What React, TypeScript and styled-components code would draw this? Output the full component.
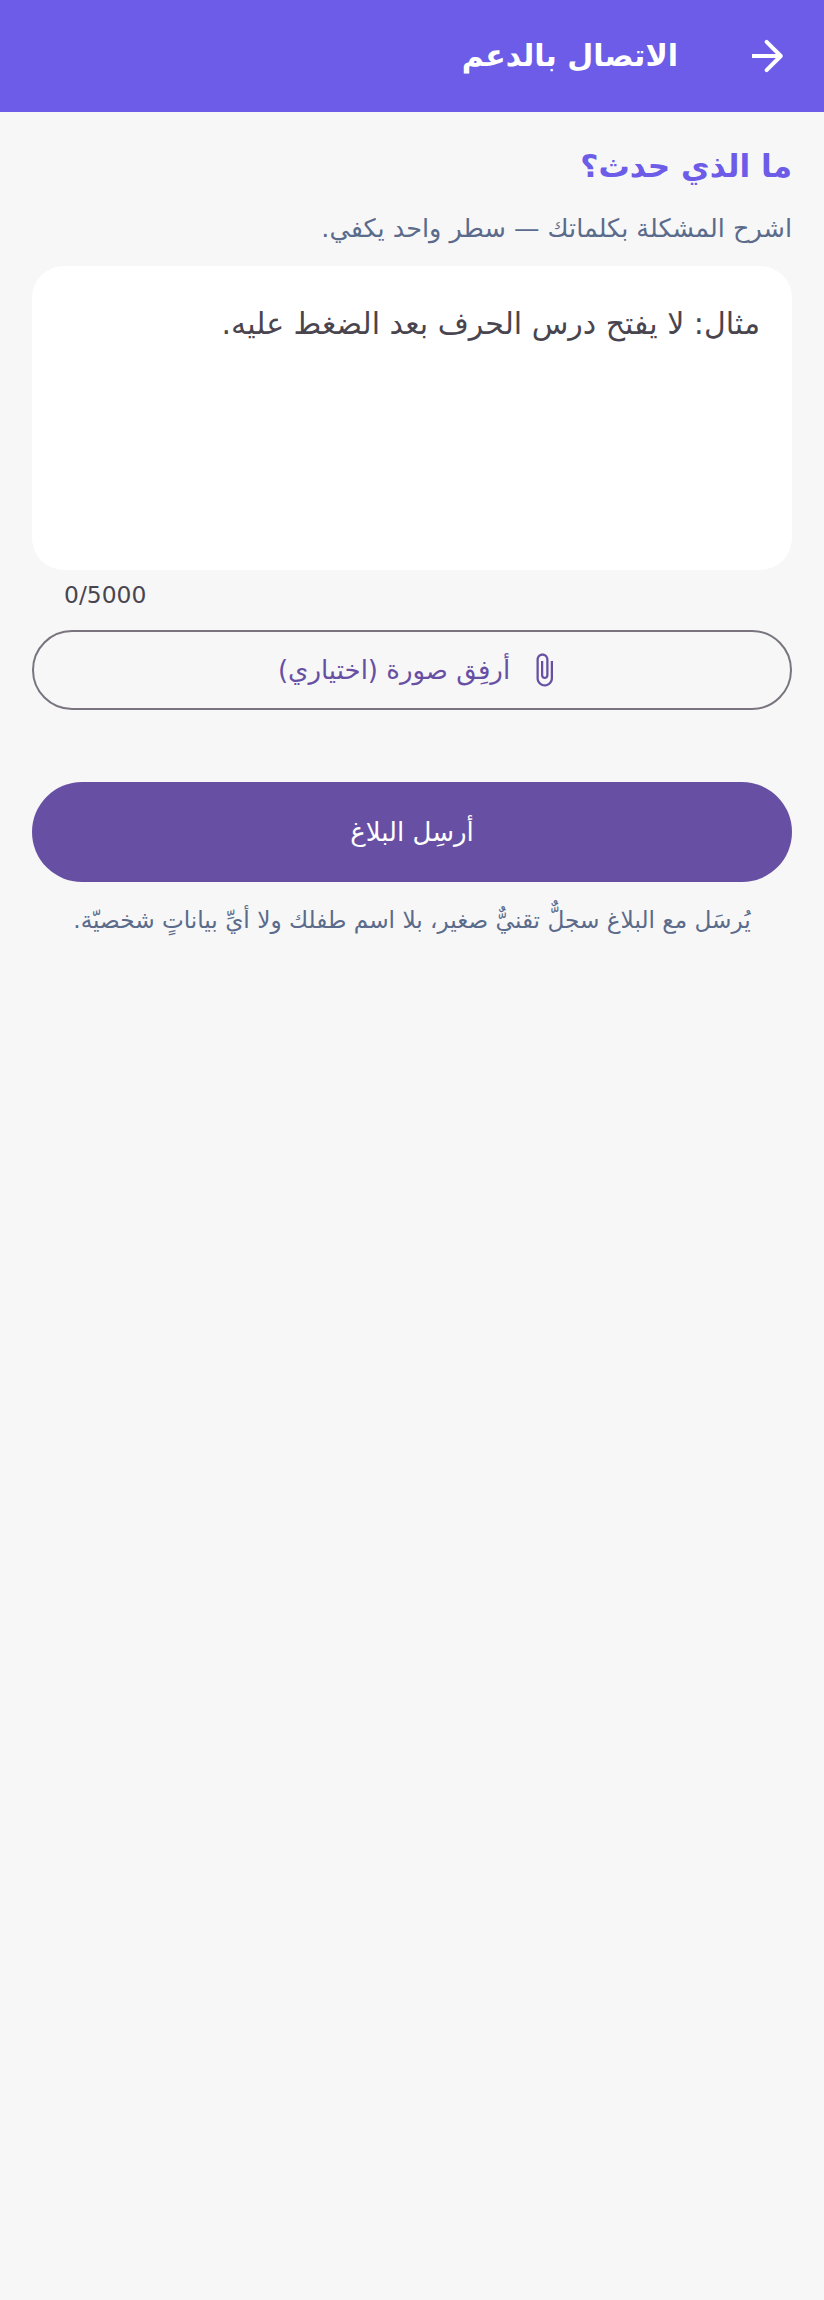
import styled, { createGlobalStyle } from "styled-components";

const GlobalStyle = createGlobalStyle`
  html, body {
    margin: 0;
    padding: 0;
    background-color: #f7f7f7;
  }
  body {
    font-family: "DejaVu Sans", "Noto Sans", sans-serif;
  }
  * {
    box-sizing: border-box;
  }
`;

const Page = styled.div`
  direction: rtl;
  width: 824px;
  height: 2300px;
  background-color: #f7f7f7;
`;

const Header = styled.header`
  display: flex;
  align-items: center;
  gap: 66px;
  height: 112px;
  padding: 0 32px 0 0;
  background-color: #6c5ce7;
`;

const BackButton = styled.button`
  display: flex;
  width: 48px;
  height: 48px;
  padding: 0;
  border: 0;
  background: none;
  color: #ffffff;
`;

const HeaderTitle = styled.h1`
  margin: 0;
  color: #ffffff;
  font-size: 30px;
  font-weight: 700;
  line-height: 48px;
`;

const Content = styled.main`
  display: flex;
  flex-direction: column;
  padding: 30px 32px 0;
`;

const Title = styled.h2`
  margin: 0;
  color: #6c5ce7;
  font-size: 31.2px;
  font-weight: 700;
  line-height: 48px;
`;

const Subtitle = styled.p`
  margin: 18px 0 0;
  color: #5a6b8c;
  font-size: 25.5px;
  line-height: 40px;
`;

const MessageBox = styled.div`
  height: 304px;
  margin-top: 18px;
  padding: 34px 32px;
  border-radius: 32px;
  background-color: #ffffff;
  color: #49454f;
  font-size: 30px;
  line-height: 48px;
`;

const Counter = styled.div`
  margin-top: 9px;
  padding: 0 32px;
  color: #49454f;
  font-size: 23.4px;
  line-height: 32px;
  text-align: left;
`;

const AttachButton = styled.button`
  display: flex;
  align-items: center;
  justify-content: center;
  gap: 16px;
  height: 80px;
  margin-top: 19px;
  padding: 0 0 0 16px;
  border: 2px solid #79747e;
  border-radius: 40px;
  background: none;
  color: #6750a4;
  font-family: inherit;
  font-size: 26px;
`;

const SubmitButton = styled.button`
  height: 100px;
  margin-top: 72px;
  border: 0;
  border-radius: 50px;
  background-color: #6750a4;
  color: #ffffff;
  font-family: inherit;
  font-size: 26px;
`;

const Note = styled.p`
  margin: 20px 0 0;
  color: #5a6b8c;
  font-size: 23.2px;
  line-height: 36px;
  text-align: center;
`;

function App() {
  return (
    <Page>
      <GlobalStyle />
      <Header>
        <BackButton aria-label="رجوع">
          <svg width="48" height="48" viewBox="0 0 24 24" fill="none" stroke="currentColor" strokeWidth="2">
            <path d="M4 12h14" />
            <path d="M11.3 4.9 18.4 12l-7.1 7.1" strokeLinecap="round" strokeLinejoin="round" />
          </svg>
        </BackButton>
        <HeaderTitle>الاتصال بالدعم</HeaderTitle>
      </Header>
      <Content>
        <Title>ما الذي حدث؟</Title>
        <Subtitle>اشرح المشكلة بكلماتك — سطر واحد يكفي.</Subtitle>
        <MessageBox>مثال: لا يفتح درس الحرف بعد الضغط عليه.</MessageBox>
        <Counter>0/5000</Counter>
        <AttachButton>
          <svg width="36" height="36" viewBox="0 0 24 24" fill="currentColor">
            <path d="M16.5 6v11.5c0 2.21-1.79 4-4 4s-4-1.79-4-4V5c0-1.38 1.12-2.5 2.5-2.5s2.5 1.12 2.5 2.5v10.5c0 .55-.45 1-1 1s-1-.45-1-1V6H10v9.5c0 1.38 1.12 2.5 2.5 2.5s2.5-1.12 2.5-2.5V5c0-2.21-1.79-4-4-4S7 2.79 7 5v12.5c0 3.04 2.46 5.5 5.5 5.5s5.5-2.46 5.5-5.5V6h-1.5z" />
          </svg>
          أرفِق صورة (اختياري)
        </AttachButton>
        <SubmitButton>أرسِل البلاغ</SubmitButton>
        <Note>يُرسَل مع البلاغ سجلٌّ تقنيٌّ صغير، بلا اسم طفلك ولا أيِّ بياناتٍ شخصيّة.</Note>
      </Content>
    </Page>
  );
}

export default App;
